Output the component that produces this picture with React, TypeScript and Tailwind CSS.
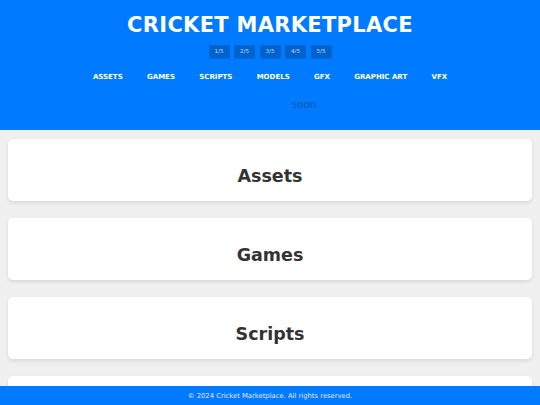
import React from "react";

const nav = ["ASSETS", "GAMES", "SCRIPTS", "MODELS", "GFX", "GRAPHIC ART", "VFX"];
const pages = ["1/5", "2/5", "3/5", "4/5", "5/5"];
const cards = ["Assets", "Games", "Scripts", "Models"];

export default function App() {
  return (
    <div className="min-h-[405px] bg-[#f0f0f0] font-['DejaVu_Sans',sans-serif]">
      <header className="bg-[#007bff] text-white pt-[12px] h-[130px]">
        <h1 className="text-center text-[21px] leading-[26px] font-bold tracking-[0.3px]">
          CRICKET MARKETPLACE
        </h1>
        <div className="mt-[7px] flex justify-center gap-[4.5px]">
          {pages.map((p) => (
            <button
              key={p}
              className="w-[21px] h-[13px] rounded-[2px] bg-[#0062cc] text-[5.5px] leading-[13px] text-[#c9dcf5] shadow-[0_1px_1px_rgba(0,0,0,0.15)]"
            >
              {p}
            </button>
          ))}
        </div>
        <nav className="mt-[14px] flex justify-center gap-[24.3px] text-[7px] leading-[10px] font-bold">
          {nav.map((n) => (
            <span key={n}>{n}</span>
          ))}
        </nav>
        <div className="mt-[15px] flex justify-center pl-[68px]">
          <span className="text-[10.5px] leading-[14px] text-[#0056b3]">soon</span>
        </div>
      </header>
      <main className="px-2 pt-[9px] pb-[30px] flex flex-col gap-[17px]">
        {cards.map((c) => (
          <section
            key={c}
            className="h-[62px] bg-white rounded-[5px] shadow-[0_2px_4px_rgba(0,0,0,0.1)] pt-[25px]"
          >
            <h2 className="text-center text-[17.5px] leading-[24px] font-bold text-[#333]">{c}</h2>
          </section>
        ))}
      </main>
      <footer className="fixed bottom-0 left-0 right-0 h-[19px] bg-[#007bff] flex items-center justify-center pt-[1px] text-[6.8px] text-[#e6e6e6]">
        © 2024 Cricket Marketplace. All rights reserved.
      </footer>
    </div>
  );
}
